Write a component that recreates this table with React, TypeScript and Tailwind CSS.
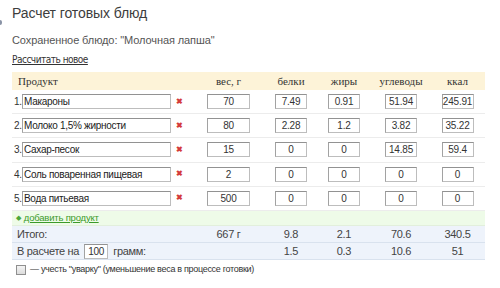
type Row = { name: string; weight: string; p: string; f: string; c: string; kcal: string };

const ROWS: Row[] = [
  { name: 'Макароны', weight: '70', p: '7.49', f: '0.91', c: '51.94', kcal: '245.91' },
  { name: 'Молоко 1,5% жирности', weight: '80', p: '2.28', f: '1.2', c: '3.82', kcal: '35.22' },
  { name: 'Сахар-песок', weight: '15', p: '0', f: '0', c: '14.85', kcal: '59.4' },
  { name: 'Соль поваренная пищевая', weight: '2', p: '0', f: '0', c: '0', kcal: '0' },
  { name: 'Вода питьевая', weight: '500', p: '0', f: '0', c: '0', kcal: '0' },
];

// product | weight | protein | fat | carbs | kcal | right gutter
const COLS = 'grid grid-cols-[186px_61px_64px_42px_72px_41px_7px]';

const arial = "font-['Liberation_Sans',Arial,sans-serif]";
const verdana = "font-['DejaVu_Sans_Condensed','DejaVu_Sans',Verdana,sans-serif]";

function NumBox({ value, w = 'w-[32px]' }: { value: string; w?: string }) {
  return (
    <div
      className={`${w} h-[15px] border border-[#bdbdbd] border-t-[#929292] border-l-[#a2a2a2] bg-white text-center text-[10px] leading-[13px] tracking-[-0.2px] text-[#333] ${arial}`}
    >
      {value}
    </div>
  );
}

export default function App() {
  return (
    <div className="w-[500px] h-[288px] bg-white overflow-hidden relative text-[#444]">
      {/* edge of the neighbouring column */}
      <span className="absolute left-0 top-[20px] w-[2px] h-[5px] rounded-r-sm bg-[#8a93a6]" />

      <div className="pl-[12px] pt-[4px]">
        <h1 className={`${arial} text-[14px] leading-[18px] tracking-[-0.1px] text-[#3d3d3d]`}>Расчет готовых блюд</h1>
        <p className={`${arial} mt-[11px] text-[11px] leading-[14px] tracking-[-0.1px] text-[#555]`}>
          Сохраненное блюдо: "Молочная лапша"
        </p>
        <a className={`${verdana} block mt-[7px] text-[10px] leading-[12px] tracking-[-0.5px] underline text-[#333]`}>
          Рассчитать новое
        </a>

        <div className="mt-[6px] w-[473px]">
          <div className={`${COLS} h-[18px] items-center bg-[#fdf3d8] font-['Liberation_Serif',serif] text-[11px] text-[#333]`}>
            <div className="pl-[6px]">Продукт</div>
            <div className="text-center">вес, г</div>
            <div className="text-center">белки</div>
            <div className="text-center">жиры</div>
            <div className="text-center">углеводы</div>
            <div className="text-center">ккал</div>
            <div />
          </div>

          {ROWS.map((r, i) => (
            <div key={r.name} className={`${COLS} h-[24.2px] items-center border-b border-[#ececec]`}>
              <div className={`flex items-center pl-[2px] ${arial} text-[10px] tracking-[-0.3px] text-[#333]`}>
                <span className="w-[8px]">{i + 1}.</span>
                <div className="w-[149px] h-[15px] border border-[#bdbdbd] border-t-[#929292] border-l-[#a2a2a2] bg-white pl-[1px] leading-[13px] text-[#222] whitespace-nowrap overflow-hidden">
                  {r.name}
                </div>
                <span className="ml-[5px] text-[#d43b3b] text-[8px] font-bold leading-none">✖</span>
              </div>
              <div className="flex justify-center">
                <NumBox value={r.weight} w="w-[43px]" />
              </div>
              <div className="flex justify-center">
                <NumBox value={r.p} />
              </div>
              <div className="flex justify-center">
                <NumBox value={r.f} />
              </div>
              <div className="flex justify-center">
                <NumBox value={r.c} />
              </div>
              <div className="flex justify-center">
                <NumBox value={r.kcal} />
              </div>
              <div />
            </div>
          ))}

          <div className={`h-[15px] flex items-center gap-[3px] pl-[4px] bg-[#eefbe8] border-b border-[#e2efdc] ${arial} text-[9.5px] tracking-[-0.2px]`}>
            <span className="text-[#4ca83a] text-[7px] leading-none">◆</span>
            <a className="underline text-[#3b9a2a]">добавить продукт</a>
          </div>

          <div className={`${COLS} h-[17px] items-center bg-[#eef3fb] border-b border-[#d9e2ee] ${arial} text-[11px] tracking-[-0.3px] text-[#444]`}>
            <div className="pl-[5px]">Итого:</div>
            <div className="text-center">667 г</div>
            <div className="text-center">9.8</div>
            <div className="text-center">2.1</div>
            <div className="text-center">70.6</div>
            <div className="text-center">340.5</div>
            <div />
          </div>

          <div className={`${COLS} h-[17px] items-center bg-[#eef3fb] border-b border-[#d9e2ee] ${arial} text-[11px] tracking-[-0.3px] text-[#444]`}>
            <div className="pl-[5px] flex items-center gap-[5px]">
              <span>В расчете на</span>
              <NumBox value="100" w="w-[24px]" />
              <span>грамм:</span>
            </div>
            <div />
            <div className="text-center">1.5</div>
            <div className="text-center">0.3</div>
            <div className="text-center">10.6</div>
            <div className="text-center">51</div>
            <div />
          </div>
        </div>

        <label className={`mt-[3px] flex items-center gap-[4px] pl-[4px] ${arial} text-[9px] tracking-[-0.3px] text-[#333]`}>
          <span className="w-[10px] h-[10px] border border-[#8f8f8f] bg-gradient-to-b from-[#f4f4f4] to-[#dcdcdc]" />
          <span>— учесть "уварку" (уменьшение веса в процессе готовки)</span>
        </label>
      </div>
    </div>
  );
}
